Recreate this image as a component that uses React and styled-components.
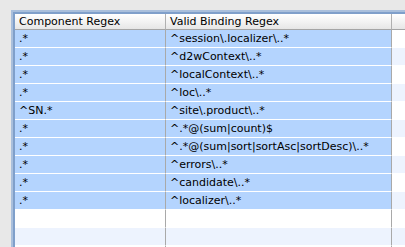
import React from "react";
import styled, { createGlobalStyle } from "styled-components";

const Global = createGlobalStyle`
  html, body { margin: 0; padding: 0; background: #e8e8e8; overflow: hidden; }
  body { font-family: "DejaVu Sans", "Liberation Sans", sans-serif; }
`;

const Page = styled.div`
  width: 405px;
  height: 247px;
  padding: 10px 0 0 11px;
  box-sizing: border-box;
  overflow: hidden;
`;

const Ring = styled.div`
  width: 520px;
  border-top: 2px solid #a9bfdc;
  border-left: 2px solid #a9bfdc;
`;

const Frame = styled.div`
  border-top: 2px solid #7f9fca;
  border-left: 2px solid #7f9fca;
  background: #fff;
`;

const Grid = styled.div`
  display: grid;
  grid-template-columns: 151px 226px 1fr;
`;

const HeaderCell = styled.div`
  height: 15px;
  border-bottom: 1px solid #a5a5a5;
  border-right: 1px solid #b0b0b0;
  background: linear-gradient(#ffffff, #f3f3f3 50%, #e6e6e6);
  font-size: 11px;
  line-height: 15px;
  padding-left: 4px;
  color: #000;
  white-space: nowrap;
  overflow: hidden;
`;

const Cell = styled.div`
  height: 17px;
  border-bottom: 1px solid #fff;
  border-right: 1px solid ${(p) => (p.$last ? "transparent" : "#a9a9a9")};
  background: ${(p) => (p.$selected ? "#b4d4fe" : p.$odd ? "#edf3fe" : "#ffffff")};
  font-size: 11px;
  line-height: 17px;
  padding-left: 4px;
  color: #000;
  white-space: nowrap;
  overflow: hidden;
`;

const rows = [
  [".*", "^session\\.localizer\\..*"],
  [".*", "^d2wContext\\..*"],
  [".*", "^localContext\\..*"],
  [".*", "^loc\\..*"],
  ["^SN.*", "^site\\.product\\..*"],
  [".*", "^.*@(sum|count)$"],
  [".*", "^.*@(sum|sort|sortAsc|sortDesc)\\..*"],
  [".*", "^errors\\..*"],
  [".*", "^candidate\\..*"],
  [".*", "^localizer\\..*"],
  ["", ""],
  ["", ""],
  ["", ""],
];

export default function App() {
  return (
    <Page>
      <Global />
      <Ring>
        <Frame>
          <Grid>
            <HeaderCell>Component Regex</HeaderCell>
            <HeaderCell>Valid Binding Regex</HeaderCell>
            <HeaderCell />
            {rows.map((r, i) => {
              const sel = r[0] !== "";
              const odd = i % 2 === 1;
              return (
                <React.Fragment key={i}>
                  <Cell $selected={sel} $odd={odd}>{r[0]}</Cell>
                  <Cell $selected={sel} $odd={odd}>{r[1]}</Cell>
                  <Cell $odd={odd} $last />
                </React.Fragment>
              );
            })}
          </Grid>
        </Frame>
      </Ring>
    </Page>
  );
}
